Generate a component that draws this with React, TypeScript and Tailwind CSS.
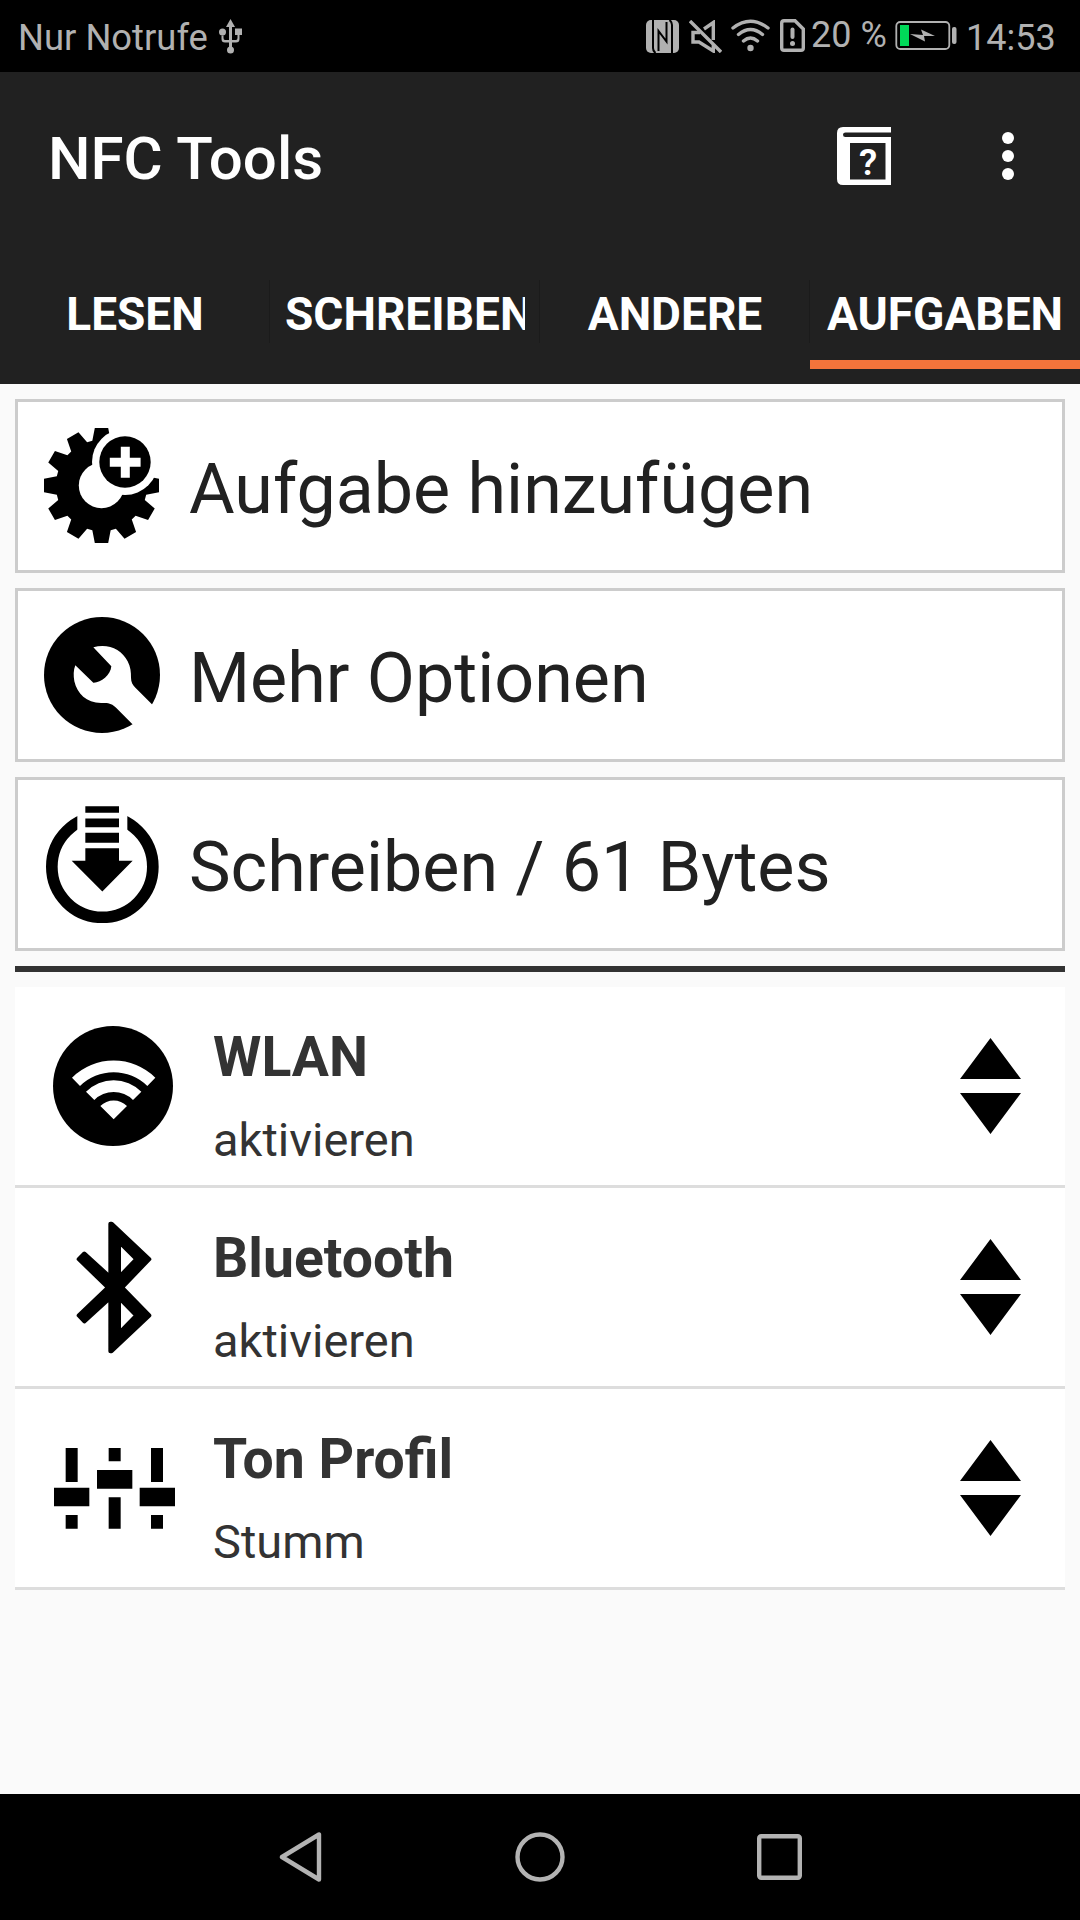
import type { ReactNode } from 'react';

const tabs = ['LESEN', 'SCHREIBEN', 'ANDERE', 'AUFGABEN'];
const activeTab = 'AUFGABEN';

// 12 teeth around a 115px box
const gearPoints = Array.from({ length: 12 }, (_, i) => {
  const corners = [
    [45.6, -11.6],
    [58, -6.6],
    [58, 6.6],
    [45.6, 11.6],
  ];
  return corners
    .map(([r, offset]) => {
      const angle = ((i * 30 + offset) * Math.PI) / 180;
      return `${(57.5 + r * Math.sin(angle)).toFixed(2)},${(57.5 - r * Math.cos(angle)).toFixed(2)}`;
    })
    .join(' ');
}).join(' ');

function GearPlusIcon() {
  return (
    <svg className="mb-px mr-px size-[115px]" viewBox="0 0 115 115">
      <polygon points={gearPoints} />
      <circle cx="57.5" cy="57.5" r="22.7" fill="#fff" />
      <circle cx="81" cy="34" r="33" fill="#fff" />
      <circle cx="81" cy="34" r="25.7" />
      <path d="M76.8 18.8h9v11h10.8v9H85.8v11h-9v-11H65.8v-9h11z" fill="#fff" />
    </svg>
  );
}

function WrenchIcon() {
  return (
    <svg className="size-[116px]" viewBox="0 0 348 348">
      <circle cx="174" cy="174" r="174" />
      <path
        fill="#fff"
        d="M148 91C190 78 233 96 251 133C260 150 261 165 261 182C261 195 266 204 275 213L323 261L348 290L300 348L264 320L217 273C205 261 195 257 178 258C130 261 100 232 91 193C88 175 88 160 94 145L148 197C170 198 200 175 202 148Z"
      />
    </svg>
  );
}

function WriteIcon() {
  return (
    <svg className="h-[117px] w-[113px]" viewBox="0 0 339 350">
      <circle cx="169" cy="182" r="151.5" fill="none" stroke="#000" strokeWidth="35" />
      <path fill="#fff" d="M94 0h150v90H94z" />
      <path d="M118 0h101v20H118zM118 37h101v26H118zM118 80h101v30H118zM118 126h101v38h41l-91 92-92-92h41z" />
    </svg>
  );
}

function WifiIcon() {
  return (
    <svg className="mb-px mr-px size-[120px]" viewBox="0 0 360 360">
      <circle cx="180" cy="180" r="180" />
      <path
        fill="#fff"
        d="M57 155A178 178 0 0 1 307 155L283 180A144 144 0 0 0 81 180ZM99 197A117 117 0 0 1 265 197L240 222A82 82 0 0 0 124 222ZM142 240A57 57 0 0 1 222 240L182 280Z"
      />
    </svg>
  );
}

function BluetoothIcon() {
  return (
    <svg className="h-[133px] w-[76px]" viewBox="0 0 228 398">
      <path
        fillRule="evenodd"
        strokeLinejoin="round"
        stroke="#000"
        strokeWidth="12"
        d="M103 8H107L220 114L138 199L220 283L107 390H103V230L25 301L8 283L96 199L8 114L25 97L103 168ZM129 62V168L181 114ZM129 230V336L181 283Z"
      />
    </svg>
  );
}

function SlidersIcon() {
  return (
    <svg className="ml-px h-[81px] w-[121px]" viewBox="0 0 363 243">
      <path d="M35 0h36v102H35zM0 119h106v56H0zM35 201h36v41H35zM164 0h36v40h-36zM129 66h106v56H129zM164 148h36v94h-36zM291 0h36v102h-36zM257 119h106v56H257zM291 201h36v41h-36z" />
    </svg>
  );
}

function ReorderIcon() {
  return (
    <svg className="h-24 w-[61px]" viewBox="0 0 61 96">
      <path d="M30.5 0L61 41H0zM0 55h61L30.5 96z" />
    </svg>
  );
}

function StatusBar() {
  return (
    <div className="flex h-[72px] bg-black pl-[18px] text-[36.4px] text-[#b1b1b1]">
      <span className="w-[201px] whitespace-nowrap leading-[75px]">Nur Notrufe</span>
      <svg className="mt-[19px] h-[35px] w-[23px]" viewBox="0 0 23 35" fill="currentColor">
        <path d="M11.5 0L16 8H13V21H17Q18.5 21 18.5 19V16H16V9.5H23V16H20.5V20Q20.5 23.5 17 23.5H13V28H10V23.5H6Q2.5 23.5 2.5 20V16.5H4.5V19Q4.5 21 6 21H10V8H7z" />
        <circle cx="3.5" cy="13" r="3.5" />
        <circle cx="11.5" cy="31" r="3.5" />
      </svg>

      <svg className="ml-[404px] mt-5 size-[33px]" viewBox="0 0 33 33" fill="currentColor">
        <rect width="33" height="33" rx="5" />
        <path
          d="M7 0V28Q7 31 9.5 33M12.5 31V11L20.5 21.5V2M26 33V5Q26 2 23.5 0"
          fill="none"
          stroke="#000"
          strokeWidth="2"
        />
      </svg>
      <svg className="ml-[10px] mt-5 size-[33px]" viewBox="0 0 33 33" fill="none" stroke="currentColor" strokeWidth="3.4">
        <path d="M1 1L32 32M15 9L24.3 2.5V20M11 12.5H4V22H10L24.3 31V25" />
      </svg>
      <svg
        className="ml-[9px] mt-[19px] h-[33px] w-[39px]"
        viewBox="0 0 39 33"
        fill="none"
        stroke="currentColor"
        strokeWidth="3.4"
        strokeLinecap="round"
      >
        <path d="M2 9Q19.5-4.5 37 9M7.5 15.5Q19.5 5.5 31.5 15.5M12.5 22Q19.5 16 26.5 22" />
        <circle cx="19.5" cy="29" r="3.2" fill="currentColor" stroke="none" />
      </svg>
      <svg className="ml-[10px] mt-[19px] h-[33px] w-[25px]" viewBox="0 0 25 33" fill="none" stroke="currentColor" strokeWidth="3.4">
        <path d="M4 1.7H15L23.3 10V29Q23.3 31.3 21 31.3H4Q1.7 31.3 1.7 29V4Q1.7 1.7 4 1.7Z" />
        <path d="M12.5 10.5V18" strokeWidth="4" strokeLinecap="round" />
        <circle cx="12.5" cy="24.5" r="2.5" fill="currentColor" stroke="none" />
      </svg>
      <span className="ml-[6px] w-[84px] whitespace-nowrap text-[36px] leading-[71px]">20 %</span>
      <svg className="mt-[21px] h-[29px] w-[62px]" viewBox="0 0 62 29">
        <rect x="1.3" y="1" width="53" height="27" rx="4" fill="none" stroke="currentColor" strokeWidth="1.8" />
        <rect x="5" y="4" width="9" height="21" fill="#00d959" />
        <path d="M15 13L28 14 26 8.5 40 15 29 15 30 20.5z" fill="currentColor" />
        <rect x="57" y="6" width="4.5" height="17" rx="2" fill="currentColor" />
      </svg>
      <span className="ml-[9px] pt-px text-[36px] leading-[75px]">14:53</span>
    </div>
  );
}

function Header() {
  return (
    <header className="h-[312px] bg-[#212121] text-white">
      <div className="flex h-[168px] items-center pl-12">
        <h1 className="grow pt-[6px] text-[60px] font-medium leading-[70px]">NFC Tools</h1>
        <svg className="mr-[111px] h-[58px] w-[54px]" viewBox="0 0 54 58">
          <path
            fill="#fff"
            fillRule="evenodd"
            d="M6 0H54V5.5H8.5Q6 5.5 6 7.8T8.5 10H54V58H6Q0 58 0 52V6Q0 0 6 0ZM13 16V52.5H48.5V16Z"
          />
          <text x="31" y="47.5" textAnchor="middle" fontSize="37" fontWeight="600" fill="#fff">
            ?
          </text>
        </svg>
        <svg className="mr-[66px] h-12 w-3" viewBox="0 0 12 48" fill="#fff">
          <circle cx="6" cy="6" r="6" />
          <circle cx="6" cy="24" r="6" />
          <circle cx="6" cy="42" r="6" />
        </svg>
      </div>
      <nav className="grid h-[129px] grid-cols-4">
        {tabs.map((tab) => (
          <div
            key={tab}
            className={`border-b-[9px] pt-10 ${tab === activeTab ? 'border-[#f4743b]' : 'border-transparent'}`}
          >
            <div className={`h-[63px] pl-[15px] ${tab === activeTab ? 'pr-[15px]' : 'border-r border-[#1b1b1b] pr-[14px]'}`}>
              <span
                className={`block overflow-hidden whitespace-nowrap text-[46px] font-bold leading-[69px] ${
                  tab === 'SCHREIBEN' ? '' : 'text-center'
                }`}
              >
                {tab}
              </span>
            </div>
          </div>
        ))}
      </nav>
    </header>
  );
}

function ActionCard({ icon, label }: { icon: ReactNode; label: string }) {
  return (
    <div className="flex h-[174px] items-center border-[3px] border-[#ccc] bg-white text-[#212121]">
      <div className="flex w-[171px] shrink-0 justify-center pr-[3px]">{icon}</div>
      <span className="whitespace-nowrap pt-[5px] text-[70px] leading-[84px]">{label}</span>
    </div>
  );
}

function TaskRow({ icon, title, detail }: { icon: ReactNode; title: string; detail: string }) {
  return (
    <div className="flex h-[201px] items-center border-b-[3px] border-[#ddd] bg-white text-[#333]">
      <div className="flex w-[198px] shrink-0 justify-center pr-px text-black">{icon}</div>
      <div className="grow pt-[27px]">
        <p className="text-[55.3px] font-bold leading-[80px]">{title}</p>
        <p className="text-[47px] leading-[84px]">{detail}</p>
      </div>
      <div className="mr-[44px]">
        <ReorderIcon />
      </div>
    </div>
  );
}

function NavigationBar() {
  return (
    <div className="flex h-[126px] items-center justify-center gap-[192px] bg-black text-[#b3b3b3]">
      <svg className="h-[50px] w-[44px]" viewBox="0 0 44 50" fill="none" stroke="currentColor" strokeWidth="4.4" strokeLinejoin="round">
        <path d="M40 2.5V47.5L3 25z" />
      </svg>
      <svg className="size-[50px]" viewBox="0 0 50 50" fill="none" stroke="currentColor" strokeWidth="4.4">
        <circle cx="25" cy="25" r="22.5" />
      </svg>
      <svg className="h-[46px] w-[45px]" viewBox="0 0 45 46" fill="none" stroke="currentColor" strokeWidth="4.4">
        <rect x="2.2" y="2.2" width="40.6" height="41.6" rx="2" />
      </svg>
    </div>
  );
}

export default function App() {
  return (
    <div className="flex h-[1920px] w-[1080px] flex-col overflow-hidden bg-[#fafafa] font-[Roboto,sans-serif]">
      <StatusBar />
      <Header />
      <main className="grow px-[15px] pt-[15px]">
        <div className="flex flex-col gap-[15px]">
          <ActionCard icon={<GearPlusIcon />} label="Aufgabe hinzufügen" />
          <ActionCard icon={<WrenchIcon />} label="Mehr Optionen" />
          <ActionCard icon={<WriteIcon />} label="Schreiben / 61 Bytes" />
        </div>
        <div className="my-[15px] h-[6px] bg-[#333]" />
        <TaskRow icon={<WifiIcon />} title="WLAN" detail="aktivieren" />
        <TaskRow icon={<BluetoothIcon />} title="Bluetooth" detail="aktivieren" />
        <TaskRow icon={<SlidersIcon />} title="Ton Profil" detail="Stumm" />
      </main>
      <NavigationBar />
    </div>
  );
}
